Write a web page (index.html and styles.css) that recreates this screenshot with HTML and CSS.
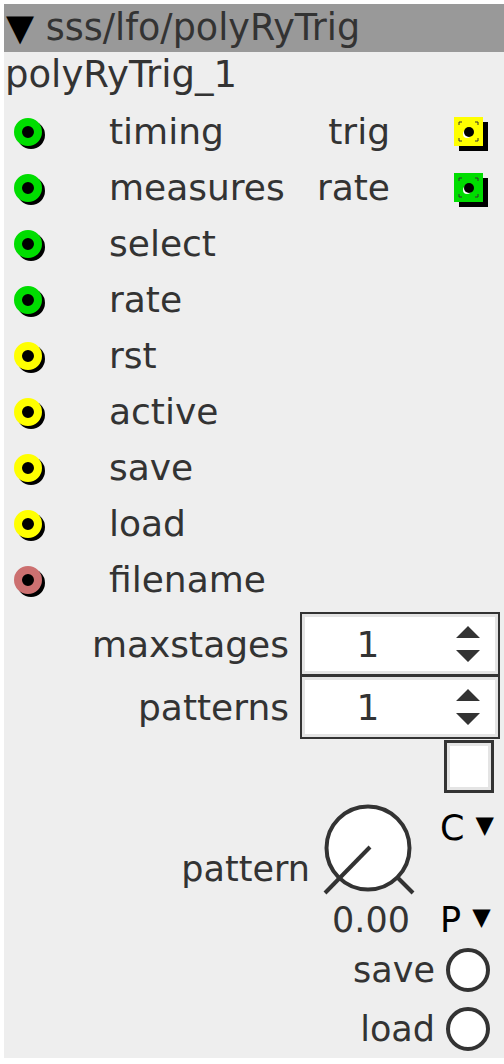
FILE: index.html
```html
<!DOCTYPE html>
<html lang="en">
<head>
  <meta charset="UTF-8">
  <title>sss/lfo/polyRyTrig</title>
  <link rel="stylesheet" href="styles.css">
</head>
<body>
  <div class="object">
    <div class="titlebar"><span class="caret">▼</span> sss/lfo/polyRyTrig</div>
    <div class="instance">polyRyTrig_1</div>

    <div class="ports">
      <div class="inlets">
        <div class="port"><svg class="jack-in" width="32" height="32" viewBox="0 0 32 32"><circle cx="17" cy="17" r="14" fill="#000"/><circle cx="14" cy="14" r="10" fill="none" stroke="#00dd00" stroke-width="8"/></svg><span>timing</span></div>
        <div class="port"><svg class="jack-in" width="32" height="32" viewBox="0 0 32 32"><circle cx="17" cy="17" r="14" fill="#000"/><circle cx="14" cy="14" r="10" fill="none" stroke="#00dd00" stroke-width="8"/></svg><span>measures</span></div>
        <div class="port"><svg class="jack-in" width="32" height="32" viewBox="0 0 32 32"><circle cx="17" cy="17" r="14" fill="#000"/><circle cx="14" cy="14" r="10" fill="none" stroke="#00dd00" stroke-width="8"/></svg><span>select</span></div>
        <div class="port"><svg class="jack-in" width="32" height="32" viewBox="0 0 32 32"><circle cx="17" cy="17" r="14" fill="#000"/><circle cx="14" cy="14" r="10" fill="none" stroke="#00dd00" stroke-width="8"/></svg><span>rate</span></div>
        <div class="port"><svg class="jack-in" width="32" height="32" viewBox="0 0 32 32"><circle cx="17" cy="17" r="14" fill="#000"/><circle cx="14" cy="14" r="10" fill="none" stroke="#ffff00" stroke-width="8"/></svg><span>rst</span></div>
        <div class="port"><svg class="jack-in" width="32" height="32" viewBox="0 0 32 32"><circle cx="17" cy="17" r="14" fill="#000"/><circle cx="14" cy="14" r="10" fill="none" stroke="#ffff00" stroke-width="8"/></svg><span>active</span></div>
        <div class="port"><svg class="jack-in" width="32" height="32" viewBox="0 0 32 32"><circle cx="17" cy="17" r="14" fill="#000"/><circle cx="14" cy="14" r="10" fill="none" stroke="#ffff00" stroke-width="8"/></svg><span>save</span></div>
        <div class="port"><svg class="jack-in" width="32" height="32" viewBox="0 0 32 32"><circle cx="17" cy="17" r="14" fill="#000"/><circle cx="14" cy="14" r="10" fill="none" stroke="#ffff00" stroke-width="8"/></svg><span>load</span></div>
        <div class="port"><svg class="jack-in" width="32" height="32" viewBox="0 0 32 32"><circle cx="17" cy="17" r="14" fill="#000"/><circle cx="14" cy="14" r="10" fill="none" stroke="#cc7070" stroke-width="8"/></svg><span>filename</span></div>
      </div>

      <div class="outlets">
        <div class="port"><span>trig</span><svg class="jack-out" width="34" height="34" viewBox="0 0 34 34"><rect x="5" y="5" width="29" height="29" fill="#000"/><rect x="0" y="0" width="29" height="29" fill="#ffff00"/><path d="M5 8V5H8M21 5H24V8M24 21V24H21M8 24H5V21" fill="none" stroke="#333" stroke-width="1"/><circle cx="13" cy="17" r="4" fill="#fff"/><circle cx="15" cy="15" r="5" fill="#000"/></svg></div>
        <div class="port"><span>rate</span><svg class="jack-out" width="34" height="34" viewBox="0 0 34 34"><rect x="5" y="5" width="29" height="29" fill="#000"/><rect x="0" y="0" width="29" height="29" fill="#00dd00"/><path d="M5 8V5H8M21 5H24V8M24 21V24H21M8 24H5V21" fill="none" stroke="#333" stroke-width="1"/><circle cx="13" cy="17" r="4" fill="#fff"/><circle cx="15" cy="15" r="5" fill="#000"/></svg></div>
      </div>
    </div>

    <div class="params">
      <div class="param">
        <span class="param-label">maxstages</span>
        <div class="spin">
          <span class="spin-value">1</span>
          <svg class="spin-arrows" width="24" height="36" viewBox="0 0 24 36"><path d="M0 12L12 0L24 12Z M0 24H24L12 36Z" fill="#333"/></svg>
        </div>
      </div>
      <div class="param">
        <span class="param-label">patterns</span>
        <div class="spin second">
          <span class="spin-value">1</span>
          <svg class="spin-arrows" width="24" height="36" viewBox="0 0 24 36"><path d="M0 12L12 0L24 12Z M0 24H24L12 36Z" fill="#333"/></svg>
        </div>
      </div>
      <div class="toggle-row"><div class="toggle"></div></div>

      <div class="knob-row">
        <span class="knob-label">pattern</span>
        <div class="knob">
          <svg width="96" height="96" viewBox="0 0 96 96">
            <circle cx="48" cy="46" r="41.5" fill="#fff" stroke="#333" stroke-width="4"/>
            <line x1="50" y1="45" x2="5" y2="91" stroke="#333" stroke-width="4"/>
            <line x1="77" y1="75" x2="93" y2="91" stroke="#333" stroke-width="4"/>
          </svg>
          <div class="knob-value">0.00</div>
        </div>
        <div class="menus">
          <div class="menu">C <span class="menu-arrow">▼</span></div>
          <div class="menu">P <span class="menu-arrow">▼</span></div>
        </div>
      </div>

      <div class="button-row"><span class="button-label">save</span><div class="round-btn"></div></div>
      <div class="button-row"><span class="button-label">load</span><div class="round-btn"></div></div>
    </div>
  </div>
</body>
</html>
```

FILE: styles.css
```css
body {
  margin: 0;
  background: #fff;
  font-family: "DejaVu Sans", sans-serif;
  color: #333;
}

.object {
  margin: 4px 0 0 4px;
  width: 500px;
  background: #eee;
  font-size: 35px;
}

.titlebar {
  background: #999;
  height: 48px;
  line-height: 48px;
  padding-left: 2px;
  font-size: 36.5px;
  white-space: nowrap;
}

.caret {
  color: #000;
}

.instance {
  height: 52px;
  line-height: 46px;
  padding-left: 1px;
  font-size: 37px;
}

/* inlets / outlets */
.ports {
  display: flex;
  justify-content: space-between;
  font-size: 36px;
}

.port {
  display: flex;
  align-items: flex-start;
  height: 56px;
  line-height: 56px;
  white-space: nowrap;
}

.jack-in {
  display: block;
  margin: 14px 63px 0 10px;
}

.outlets {
  margin-right: 16px;
}

.outlets .port {
  justify-content: flex-end;
}

.jack-out {
  display: block;
  margin: 13px 0 0 64px;
}

/* parameters */
.params {
  margin-top: 4px;
}

.param {
  display: flex;
  justify-content: flex-end;
  align-items: center;
  margin-right: 4px;
  font-size: 36px;
}

.param-label {
  margin-right: 11px;
}

.spin {
  display: flex;
  align-items: center;
  box-sizing: border-box;
  width: 200px;
  height: 64px;
  border: 2px solid #333;
  background: #fff;
  box-shadow: inset 0 0 0 3px #e4e4e4;
}

.spin.second {
  margin-top: -1px;
}

.spin-value {
  width: 132px;
  text-align: center;
}

.spin-arrows {
  display: block;
  margin-left: 22px;
}

.toggle-row {
  display: flex;
  justify-content: flex-end;
  margin-right: 10px;
}

.toggle {
  box-sizing: border-box;
  width: 50px;
  height: 53px;
  margin-top: 1px;
  border: 3px solid #333;
  background: #fff;
  box-shadow: inset 0 0 0 3px #e4e4e4;
}

.knob-row {
  display: flex;
  justify-content: flex-end;
  align-items: center;
  height: 143px;
  margin-top: 4px;
  margin-right: 10px;
}

.knob-label {
  line-height: 40px;
  margin-right: 10px;
}

.knob svg {
  display: block;
  margin-top: 5px;
}

.knob-value {
  line-height: 40px;
  padding: 2px 0 0 6px;
  text-align: center;
}

.menus {
  display: flex;
  flex-direction: column;
  justify-content: space-between;
  height: 100%;
  margin-left: 24px;
  color: #000;
}

.menu {
  line-height: 40px;
  white-space: nowrap;
}

.menu:first-child {
  margin-top: 8px;
}

.menu-arrow {
  font-size: 24px;
  vertical-align: 7px;
}

.button-row {
  display: flex;
  justify-content: flex-end;
  align-items: center;
  height: 59px;
  margin-right: 14px;
}

.button-label {
  margin-right: 11px;
}

.round-btn {
  box-sizing: border-box;
  width: 44px;
  height: 44px;
  border: 4px solid #333;
  border-radius: 50%;
  background: #fff;
}
```
